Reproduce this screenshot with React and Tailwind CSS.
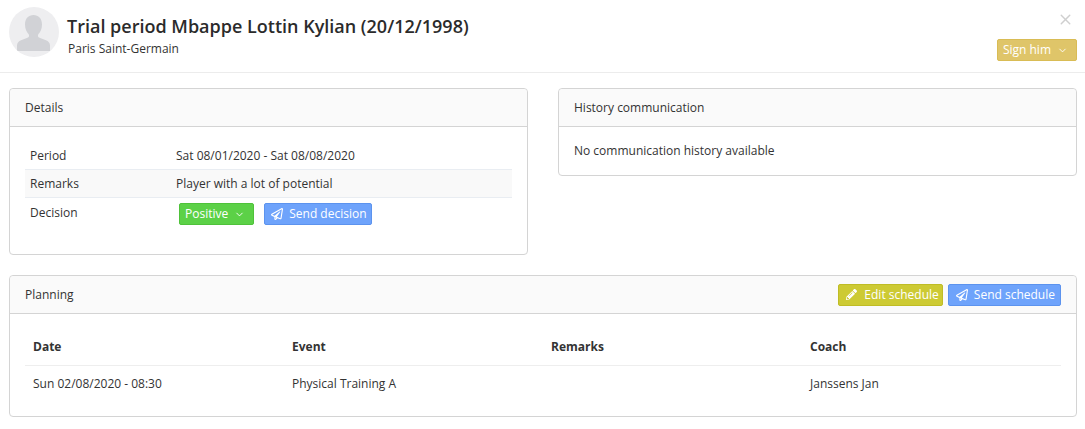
import { FaRegPaperPlane, FaPencilAlt } from "react-icons/fa";
import { FiChevronDown, FiX } from "react-icons/fi";

function Card({ title, actions, className, children }) {
  return (
    <div className={`border border-[#d4d4d4] rounded-[4px] bg-white ${className}`}>
      <div className="h-[38px] bg-[#fafafa] border-b border-[#d4d4d4] rounded-t-[4px] pl-[15px] pr-[15px] flex items-center justify-between">
        <span>{title}</span>
        {actions}
      </div>
      {children}
    </div>
  );
}

function Btn({ color, icon, chevron, children }) {
  return (
    <button className={`h-[22px] pl-[5px] rounded-[2px] border text-white text-[12px] font-medium flex items-center ${color}`}>
      {icon}
      {children}
      {chevron && <FiChevronDown className="ml-[6px] mr-[3px] w-[11px] h-[11px]" />}
    </button>
  );
}

export default function App() {
  return (
    <div className="w-[1085px] h-[429px] bg-white text-[12px] text-[#333] overflow-hidden font-['Open_Sans',sans-serif]">
      <div className="h-[73px] border-b border-[#ececec] flex pl-[9px] pr-[8px]">
        <div className="w-[50px] h-[50px] mt-[7px] rounded-full bg-[#eeeef0] overflow-hidden shrink-0">
          <svg viewBox="0 0 50 50" className="w-[50px] h-[50px]">
            <path fill="#d1d2d6" d="M24.5 8c-5 0-8.500 3.500-8.500 9.500 0 4 1.500 7.500 3.500 9.500 1 1.500.5 3-.5 3.500-2 1-5.500 2-7.500 3-2 1-3.500 2.500-3.500 5V44h33v-5.500c0-2.500-1.500-4-3.500-5-2-1-5.500-2-7.500-3-1-.5-1.500-2-.5-3.500 2-2 3.500-5.500 3.500-9.500 0-6-3.500-9.500-8.500-9.500z" />
          </svg>
        </div>
        <div className="ml-[8px] mt-[13px]">
          <div className="text-[18px] leading-[26px] font-semibold text-[#2b2b2b]">Trial period Mbappe Lottin Kylian (20/12/1998)</div>
          <div className="text-[12px] leading-[16px] mt-[2px] ml-[1px] text-[#333]">Paris Saint-Germain</div>
        </div>
        <div className="ml-auto flex flex-col items-end">
          <FiX className="mt-[11px] mr-[3px] w-[17px] h-[17px] text-[#cfcfcf]" />
          <div className="mt-[11px]">
            <Btn color="bg-[#dfc569] border-[#d9bc55] pr-[5px]" chevron>Sign him</Btn>
          </div>
        </div>
      </div>

      <div className="flex items-start justify-between pl-[9px] pr-[8px] mt-[15px]">
        <Card title="Details" className="w-[519px] h-[167px]">
          <div className="px-[15px] pt-[14px]">
            <div className="flex h-[28px] items-center px-[5px] pt-[2px]">
              <span className="w-[146px]">Period</span>
              <span>Sat 08/01/2020 - Sat 08/08/2020</span>
            </div>
            <div className="flex h-[29px] items-center px-[5px] bg-[#f9f9f9] border-y border-[#e9edf2]">
              <span className="w-[146px]">Remarks</span>
              <span>Player with a lot of potential</span>
            </div>
            <div className="flex px-[5px] pt-[5px]">
              <span className="w-[149px] mt-[1px]">Decision</span>
              <div className="flex gap-[10px]">
                <Btn color="bg-[#5cd147] border-[#4fc23a] pr-[5px]" chevron>Positive</Btn>
                <Btn color="bg-[#6ea3fb] border-[#5c93ee] pr-[4px]" icon={<FaRegPaperPlane className="w-[12px] h-[12px] mr-[6px] ml-[1px]" />}>Send decision</Btn>
              </div>
            </div>
          </div>
        </Card>
        <Card title="History communication" className="w-[519px] h-[88px]">
          <div className="px-[15px] pt-[15px] leading-[18px]">No communication history available</div>
        </Card>
      </div>

      <div className="pl-[9px] pr-[8px] mt-[20px]">
        <Card
          title="Planning"
          className="h-[142px]"
          actions={
            <div className="flex gap-[5px]">
              <Btn color="bg-[#cdca33] border-[#bfbc25] pr-[3px]" icon={<FaPencilAlt className="w-[11px] h-[11px] mr-[7px] ml-[2px]" />}>Edit schedule</Btn>
              <Btn color="bg-[#6ea3fb] border-[#5c93ee] pr-[5px]" icon={<FaRegPaperPlane className="w-[12px] h-[12px] mr-[6px] ml-[2px]" />}>Send schedule</Btn>
            </div>
          }
        >
          <div className="px-[15px] pt-[14px]">
            <div className="grid grid-cols-[repeat(4,259px)] h-[38px] items-center px-[8px] font-bold border-b border-[#eeeeee] text-[#333]">
              <span>Date</span>
              <span>Event</span>
              <span>Remarks</span>
              <span>Coach</span>
            </div>
            <div className="grid grid-cols-[repeat(4,259px)] h-[36px] items-center px-[8px]">
              <span>Sun 02/08/2020 - 08:30</span>
              <span>Physical Training A</span>
              <span></span>
              <span>Janssens Jan</span>
            </div>
          </div>
        </Card>
      </div>
    </div>
  );
}
